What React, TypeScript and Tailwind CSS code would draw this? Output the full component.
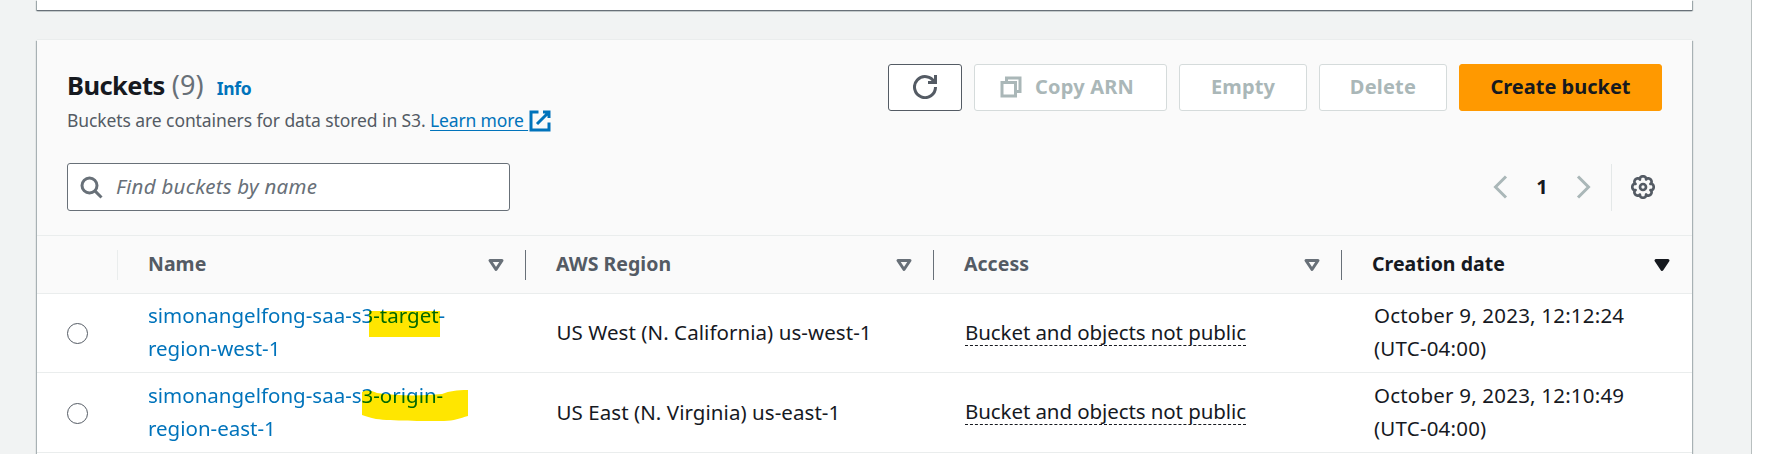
import type { ReactNode } from "react";

function Icon({ children, className = "" }: { children: ReactNode; className?: string }) {
  return (
    <svg viewBox="0 0 16 16" className={"h-6 w-6 shrink-0 " + className} fill="none" stroke="currentColor" strokeWidth="2">
      {children}
    </svg>
  );
}

// Scalloped outline with eight rounded teeth
const gearPath =
  Array.from({ length: 96 }, (_, i) => {
    const a = (i / 96) * Math.PI * 2;
    const r = 5.4 + 1.75 * Math.sqrt(Math.abs(Math.cos(4 * a)));
    return `${i ? "L" : "M"}${(8 + r * Math.cos(a)).toFixed(2)} ${(8 + r * Math.sin(a)).toFixed(2)}`;
  }).join("") + "Z";

const columns = "grid grid-cols-[81px_408px_408px_408px_1fr]";

function HeaderCell({ label, sorted = false }: { label: string; sorted?: boolean }) {
  return (
    <div
      className={
        "flex h-[30px] items-center justify-between pl-[30px] font-bold text-[19.5px] tracking-[0.03px] " +
        (sorted ? "pr-[18px] text-[#16191f]" : "border-r border-[#687078] pr-[17px] text-[#545b64]")
      }
    >
      <span className="pb-[2px]">{label}</span>
      <svg viewBox="0 0 16 16" className={"h-6 w-6 " + (sorted ? "text-[#16191f]" : "text-[#687078]")} fill={sorted ? "currentColor" : "none"} stroke="currentColor" strokeWidth="2" strokeLinejoin="round">
        <path d="M4 5h8l-4 6z" />
      </svg>
    </div>
  );
}

type Bucket = { name: string; mark: ReactNode; line2: string; region: string; time: string };

const buckets: Bucket[] = [
  {
    name: "simonangelfong-saa-s3-target-",
    mark: <span className="absolute left-[221px] top-[12px] h-[26px] w-[71px] bg-[#ffe600] mix-blend-multiply" />,
    line2: "region-west-1",
    region: "US West (N. California) us-west-1",
    time: "12:12:24",
  },
  {
    name: "simonangelfong-saa-s3-origin-",
    mark: (
      <svg viewBox="0 0 106 32" className="absolute left-[214px] top-[11px] h-8 w-[106px] mix-blend-multiply" fill="#ffe600">
        <path d="M0 2C5-1 10 1 15 3C35 6 60 6 80 4C88 1 94 0 106 0V26C98 28 92 31 82 31C60 31 30 31 14 29C8 28 4 26 0 25Z" />
      </svg>
    ),
    line2: "region-east-1",
    region: "US East (N. Virginia) us-east-1",
    time: "12:10:49",
  },
];

const button = "flex h-[47px] items-center justify-center rounded-[3px] border pb-[2px] text-[20px] font-bold ";

export default function App() {
  return (
    <div className="flex h-[454px] w-[1786px] overflow-hidden bg-[#f2f3f3] text-[#16191f]" style={{ fontFamily: '"Noto Sans", sans-serif' }}>
      <div className="flex w-[1752px] flex-col border-r border-[#b8bfbf] bg-[#f1f3f3] pl-[37px] pr-[58px]">
        <div className="h-[10px] w-[1655px] shrink-0 bg-white shadow-[0_1px_1px_0_#687078,1px_1px_1px_0_rgba(0,28,36,0.3),-1px_1px_1px_0_rgba(0,28,36,0.3)]" />

        <section className="mt-[30px] h-[440px] w-[1655px] shrink-0 bg-white shadow-[0_-1px_0_0_#eaeded,1px_1px_1px_0_rgba(0,28,36,0.3),-1px_1px_1px_0_rgba(0,28,36,0.3)]">
          <div className="h-[195px] bg-[#fafafa] pl-[30px] pr-[30px] pt-6">
            <div className="flex h-[99px] items-start justify-between">
              <div>
                <div className="-mt-px mb-px flex h-[43px] items-baseline">
                  <h2 className="text-[25.5px] font-bold leading-[43px] tracking-[-0.55px]">
                    Buckets <span className="ml-px text-[27px] font-normal tracking-[0.1px] text-[#687078]">(9)</span>
                  </h2>
                  <a className="ml-[13px] text-[17.5px] font-bold text-[#0073bb] tracking-[-0.35px]">Info</a>
                </div>
                <p className="flex h-[27px] items-center text-[17.5px] leading-[27px] tracking-[-0.09px] text-[#545b64]">
                  <span className="whitespace-pre">Buckets are containers for data stored in S3. </span>
                  <a className="flex items-center text-[#0073bb]">
                    <span className="whitespace-pre tracking-[-0.15px] underline underline-offset-[3px]">Learn more </span>
                    <Icon>
                      <path d="M7 2H2v12h12V9M10 2h4v4M6 10l8-8" />
                    </Icon>
                  </a>
                </p>
              </div>
              <div className="flex gap-3">
                <button className={button + "w-[74px] border-[#545b64] bg-white text-[#545b64]"}>
                  <Icon className="mt-px">
                    <path d="M10 5h5V0M15 8a7 7 0 1 1-.7-3" />
                  </Icon>
                </button>
                <button className={button + "w-[193px] gap-3 border-[#d5dbdb] bg-white pr-[8px] tracking-[0.2px] text-[#aab7b8]"}>
                  <Icon className="mt-px">
                    <path d="M2 5h9v9H2zM5 5V2h9v9h-3" />
                  </Icon>
                  Copy ARN
                </button>
                <button className={button + "w-[128px] border-[#d5dbdb] bg-white tracking-[0.1px] text-[#aab7b8]"}>Empty</button>
                <button className={button + "w-[128px] border-[#d5dbdb] bg-white tracking-[0.2px] text-[#aab7b8]"}>Delete</button>
                <button className={button + "w-[203px] border-[#ff9900] bg-[#ff9900] text-[#16191f]"}>Create bucket</button>
              </div>
            </div>
            <div className="flex h-12 items-center justify-between">
              <div className="flex h-12 w-[443px] items-center rounded-[3px] border border-[#687078] bg-white pl-[11px]">
                <Icon className="text-[#687078]">
                  <circle cx="7" cy="7" r="5" />
                  <path d="M10.6 10.6L15 15" />
                </Icon>
                <span className="ml-[13px] pb-[2px] text-[20.5px] italic tracking-[0.25px] text-[#687078]">Find buckets by name</span>
              </div>
              <div className="flex items-center">
                <Icon className="text-[#aab7b8]">
                  <path d="M12 1L5 8l7 7" />
                </Icon>
                <span className="w-[60px] text-center text-[20px] font-bold">1</span>
                <Icon className="text-[#aab7b8]">
                  <path d="M4 1l7 7-7 7" />
                </Icon>
                <div className="ml-[15px] mr-[19px] h-[47px] w-px bg-[#e4e8e8]" />
                <Icon className="mr-[7px] text-[#545b64]">
                  <path d={gearPath} strokeWidth="1.8" strokeLinejoin="round" />
                  <circle cx="8" cy="8" r="2" strokeWidth="1.8" />
                </Icon>
              </div>
            </div>
          </div>

          <div className={columns + " h-[59px] items-center border-y border-[#eaeded] bg-[#fafafa]"}>
            <div className="h-[30px] border-r border-[#eaeded]" />
            <HeaderCell label="Name" />
            <HeaderCell label="AWS Region" />
            <HeaderCell label="Access" />
            <HeaderCell label="Creation date" sorted />
          </div>

          {buckets.map((b, i) => (
            <div key={b.region} className={columns + " items-center border-b border-[#eaeded] text-[20.5px] leading-[33px] " + (i === 0 ? "h-[79px]" : "h-[80px]")}>
              <div className="pl-[30px] pt-px">
                <div className="h-[21px] w-[21px] rounded-full border-[1.5px] border-[#545b64] bg-white" />
              </div>
              <div className="relative isolate mb-[2px] ml-[30px] whitespace-nowrap text-[#0073bb]">
                {b.name}
                <br />
                {b.line2}
                {b.mark}
              </div>
              <div className="mb-[1px] pl-[30.5px] tracking-[0.06px]">{b.region}</div>
              <div className="mb-[2px] pl-[31px] tracking-[-0.09px]">
                <span className="relative inline-block leading-[26px]">
                  Bucket and objects not public
                  <span className="absolute inset-x-0 -bottom-px border-b border-dashed border-[#16191f]" />
                </span>
              </div>
              <div className="mb-[2px] pl-[32px] tracking-[0.2px]">
                October 9, 2023, {b.time}
                <br />
                (UTC-04:00)
              </div>
            </div>
          ))}
        </section>
      </div>
      <div className="grow bg-white" />
    </div>
  );
}
